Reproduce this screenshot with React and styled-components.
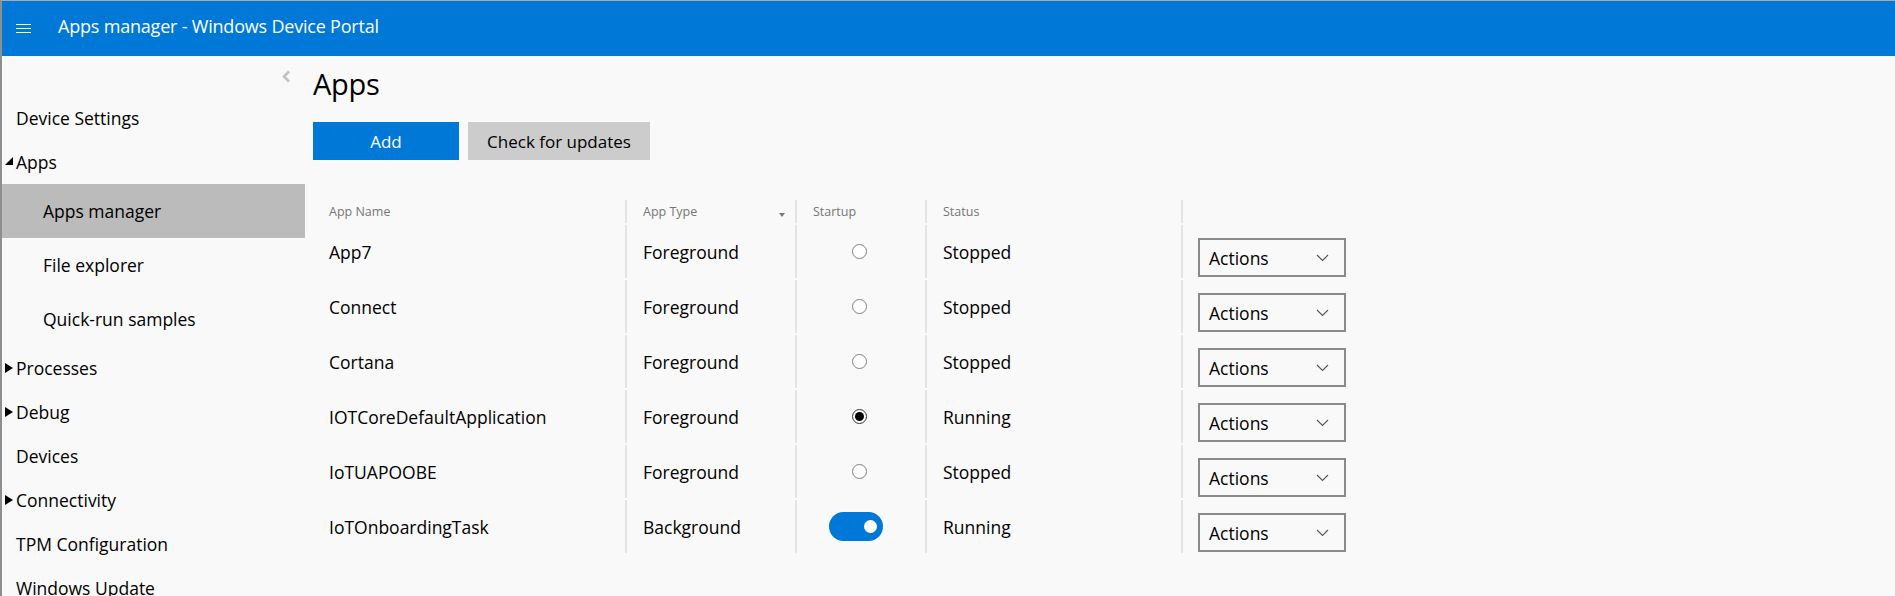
import React from "react";
import styled, { createGlobalStyle } from "styled-components";

const navItems = [
  { label: "Device Settings" },
  { label: "Apps", arrow: "open" },
  { label: "Apps manager", sub: true, active: true },
  { label: "File explorer", sub: true },
  { label: "Quick-run samples", sub: true },
  { label: "Processes", arrow: "closed" },
  { label: "Debug", arrow: "closed" },
  { label: "Devices" },
  { label: "Connectivity", arrow: "closed" },
  { label: "TPM Configuration" },
  { label: "Windows Update" },
];

const apps = [
  { name: "App7", type: "Foreground", startup: "radio", on: false, status: "Stopped" },
  { name: "Connect", type: "Foreground", startup: "radio", on: false, status: "Stopped" },
  { name: "Cortana", type: "Foreground", startup: "radio", on: false, status: "Stopped" },
  { name: "IOTCoreDefaultApplication", type: "Foreground", startup: "radio", on: true, status: "Running" },
  { name: "IoTUAPOOBE", type: "Foreground", startup: "radio", on: false, status: "Stopped" },
  { name: "IoTOnboardingTask", type: "Background", startup: "toggle", on: true, status: "Running" },
];

function App() {
  return (
    <>
      <GlobalStyle />
      <Frame>
        <Header>
          <Hamburger aria-label="menu">
            <span />
            <span />
            <span />
          </Hamburger>
          <Title>Apps manager - Windows Device Portal</Title>
        </Header>
        <Body>
          <Sidebar>
            <CollapseRow>
              <svg width="9" height="13" viewBox="0 0 9 13">
                <polyline points="7,1.5 2,6.5 7,11.5" fill="none" stroke="#c2c2c2" strokeWidth="2.6" />
              </svg>
            </CollapseRow>
            {navItems.map((item) => (
              <NavItem key={item.label} $sub={item.sub} $active={item.active} $arrow={!!item.arrow}>
                {item.arrow && <Arrow $open={item.arrow === "open"} />}
                {item.label}
              </NavItem>
            ))}
          </Sidebar>
          <Main>
            <PageTitle>Apps</PageTitle>
            <Buttons>
              <Button $primary>Add</Button>
              <Button>Check for updates</Button>
            </Buttons>
            <Grid>
              <HeadCell>App Name</HeadCell>
              <HeadCell $sep>
                App Type
                <SortArrow />
              </HeadCell>
              <HeadCell $sep>Startup</HeadCell>
              <HeadCell $sep>Status</HeadCell>
              <HeadCell $sep />
              {apps.map((a) => (
                <React.Fragment key={a.name}>
                  <Cell>{a.name}</Cell>
                  <Cell $sep>{a.type}</Cell>
                  <Cell $sep $center>
                    {a.startup === "toggle" ? <Toggle $on={a.on} /> : <Radio $on={a.on} />}
                  </Cell>
                  <Cell $sep>{a.status}</Cell>
                  <ActionCell $sep>
                    <Dropdown>
                      Actions
                      <svg width="13" height="8" viewBox="0 0 13 8">
                        <polyline points="1,1 6.5,6.5 12,1" fill="none" stroke="#555" strokeWidth="1.1" />
                      </svg>
                    </Dropdown>
                  </ActionCell>
                </React.Fragment>
              ))}
            </Grid>
          </Main>
        </Body>
      </Frame>
    </>
  );
}

const GlobalStyle = createGlobalStyle`
  html, body {
    margin: 0;
    padding: 0;
    background: #f9f9f9;
  }
  body {
    font-family: "Open Sans", "Noto Sans", sans-serif;
    color: #000;
  }
`;

const Frame = styled.div`
  height: 596px;
  box-sizing: border-box;
  overflow: hidden;
  border-top: 1px solid #a9a9a9;
  border-left: 2px solid #8f8f8f;
  background: #f9f9f9;
  display: flex;
  flex-direction: column;
`;

const Header = styled.header`
  height: 55px;
  flex-shrink: 0;
  background: #0078d7;
  color: #fff;
  display: flex;
  align-items: center;
  padding: 0 0 6px 14px;
  box-sizing: border-box;
`;

const Hamburger = styled.div`
  width: 15px;
  display: flex;
  flex-direction: column;
  gap: 3px;
  margin: 6px 27px 0 0;
  span {
    display: block;
    height: 1px;
    background: #fff;
  }
`;

const Title = styled.div`
  font-size: 18px;
  letter-spacing: -0.2px;
`;

const Body = styled.div`
  flex: 1;
  display: flex;
`;

const Sidebar = styled.nav`
  width: 303px;
  flex-shrink: 0;
  display: flex;
  flex-direction: column;
`;

const CollapseRow = styled.div`
  height: 40px;
  display: flex;
  align-items: center;
  justify-content: flex-end;
  padding-right: 14px;
`;

const NavItem = styled.div`
  display: flex;
  align-items: center;
  height: ${(p) => (p.$sub ? "54px" : "44px")};
  padding-left: ${(p) => (p.$sub ? "41px" : p.$arrow ? "3px" : "14px")};
  background: ${(p) => (p.$active ? "#bbbbbb" : "transparent")};
  font-size: 17.5px;
  flex-shrink: 0;
`;

const Arrow = styled.span`
  width: 0;
  height: 0;
  ${(p) =>
    p.$open
      ? `border-bottom: 8px solid #000; border-left: 8px solid transparent; margin: 0 3px 3px 0;`
      : `border-left: 8px solid #000; border-top: 5px solid transparent; border-bottom: 5px solid transparent; margin-right: 3px;`}
`;

const Main = styled.main`
  flex: 1;
  padding: 8px 0 0 8px;
`;

const PageTitle = styled.h1`
  margin: 0;
  font-size: 29px;
  font-weight: 400;
  line-height: 40px;
  letter-spacing: -0.3px;
`;

const Buttons = styled.div`
  display: flex;
  gap: 9px;
  margin-top: 18px;
`;

const Button = styled.button`
  height: 38px;
  width: ${(p) => (p.$primary ? "146px" : "182px")};
  border: none;
  padding: 0;
  font-family: inherit;
  font-size: 17px;
  background: ${(p) => (p.$primary ? "#0078d7" : "#cccccc")};
  color: ${(p) => (p.$primary ? "#fff" : "#000")};
`;

const Grid = styled.div`
  margin-top: 40px;
  display: grid;
  grid-template-columns: 312px 170px 130px 256px 220px;
  grid-auto-rows: 53px;
  grid-template-rows: 23px;
  row-gap: 2px;
`;

const HeadCell = styled.div`
  position: relative;
  display: flex;
  align-items: center;
  padding-left: 16px;
  border-left: ${(p) => (p.$sep ? "2px solid #e4e4e4" : "none")};
  font-size: 12.5px;
  color: #767676;
`;

const SortArrow = styled.span`
  position: absolute;
  right: 10px;
  top: 13px;
  width: 0;
  height: 0;
  border-top: 4px solid #777;
  border-left: 3px solid transparent;
  border-right: 3px solid transparent;
`;

const Cell = styled.div`
  display: flex;
  align-items: center;
  justify-content: ${(p) => (p.$center ? "center" : "flex-start")};
  padding-left: ${(p) => (p.$center ? "0" : "16px")};
  border-left: ${(p) => (p.$sep ? "2px solid #e4e4e4" : "none")};
  font-size: 17.5px;
`;

const ActionCell = styled(Cell)`
  align-items: flex-end;
  padding-left: 15px;
  padding-bottom: 1px;
`;

const Dropdown = styled.div`
  width: 148px;
  height: 39px;
  box-sizing: border-box;
  border: 2px solid #8a8a8a;
  display: flex;
  align-items: center;
  justify-content: space-between;
  padding: 0 15px 0 9px;
`;

const Radio = styled.span`
  width: 15px;
  height: 15px;
  margin-right: 3px;
  box-sizing: border-box;
  border-radius: 50%;
  border: 1px solid ${(p) => (p.$on ? "#333" : "#808080")};
  background: #fff;
  display: flex;
  align-items: center;
  justify-content: center;
  &::after {
    content: "";
    display: ${(p) => (p.$on ? "block" : "none")};
    width: 9px;
    height: 9px;
    border-radius: 50%;
    background: #000;
  }
`;

const Toggle = styled.span`
  width: 54px;
  height: 29px;
  margin-right: 10px;
  border-radius: 15px;
  background: ${(p) => (p.$on ? "#0078d7" : "#ccc")};
  display: flex;
  align-items: center;
  justify-content: ${(p) => (p.$on ? "flex-end" : "flex-start")};
  padding: 0 6px;
  box-sizing: border-box;
  &::after {
    content: "";
    width: 13px;
    height: 13px;
    border-radius: 50%;
    background: #fff;
  }
`;

export default App;
